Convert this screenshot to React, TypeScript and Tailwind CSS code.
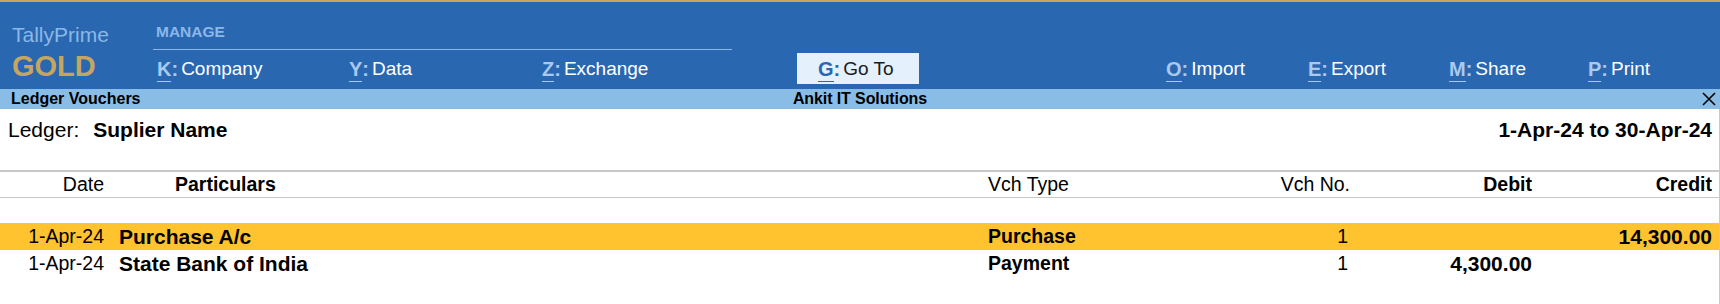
const manage = [
  ["K", "Company"],
  ["Y", "Data"],
  ["Z", "Exchange"],
];

const actions = [
  ["O", "Import", "w-[142px]"],
  ["E", "Export", "w-[141px]"],
  ["M", "Share", "w-[139px]"],
  ["P", "Print", "w-[120px]"],
];

const rows = [
  { date: "1-Apr-24", part: "Purchase A/c", type: "Purchase", no: "1", debit: "", credit: "14,300.00", active: true },
  { date: "1-Apr-24", part: "State Bank of India", type: "Payment", no: "1", debit: "4,300.00", credit: "", active: false },
];

function MenuItem({ hotkey, label, className = "" }: { hotkey: string; label: string; className?: string }) {
  return (
    <div className={"flex shrink-0 items-start text-[20px] leading-[24px] " + className}>
      <span className="border-b border-[#a9c9ef] font-bold text-[#a9c9ef]">{hotkey}</span>
      <span className="mr-[3px] font-bold text-[#a9c9ef]">:</span>
      <span className="text-[19px] text-white">{label}</span>
    </div>
  );
}

export default function App() {
  return (
    <div className="h-[304px] w-[1720px] overflow-hidden bg-white font-['Liberation_Sans',Arial,sans-serif] text-black">
      {/* top bar */}
      <div className="flex h-[89px] border-t-2 border-[#c9a55c] bg-[#2a67b1]">
        <div className="w-[153px] shrink-0 pl-[12px] pt-[21px]">
          <div className="text-[21px] leading-[24px] text-[#8ab8e8]">TallyPrime</div>
          <div className="mt-[3px] text-[29px] font-bold leading-[32px] text-[#c6a65e]">GOLD</div>
        </div>

        <div className="flex w-[579px] shrink-0 flex-col pt-[21px]">
          <div className="h-[27px] border-b border-[#8ab8e8] pl-[3px] text-[15.5px] font-bold leading-[18px] text-[#8ab8e8]">
            MANAGE
          </div>
          <div className="mt-[7px] grid grid-cols-[192px_193px_194px] pl-[4px]">
            {manage.map(([k, l]) => (
              <MenuItem key={k} hotkey={k} label={l} />
            ))}
          </div>
        </div>

        <div className="ml-[65px] mt-[51px] flex h-[31px] w-[122px] shrink-0 items-start bg-[#e4f0fb] pl-[21px] pt-[4px] text-[20px] leading-[24px]">
          <span className="border-b border-[#2a67b1] font-bold text-[#2a67b1]">G</span>
          <span className="mr-[3px] font-bold text-[#2a67b1]">:</span>
          <span className="text-[19px] text-[#1b1b1b]">Go To</span>
        </div>

        <div className="ml-[247px] flex shrink-0 pt-[55px]">
          {actions.map(([k, l, w]) => (
            <MenuItem key={k} hotkey={k} label={l} className={w} />
          ))}
        </div>
      </div>

      {/* title bar */}
      <div className="grid h-[20px] grid-cols-[1fr_auto_1fr] items-center bg-[#89bde6] px-[4px] text-[16px] font-bold leading-[20px]">
        <span className="pl-[7px]">Ledger Vouchers</span>
        <span className="text-center tracking-[-0.1px]">Ankit IT Solutions</span>
        <div className="flex justify-end">
          <svg width="14" height="14" viewBox="0 0 14 14">
            <path d="M1 1L13 13M13 1L1 13" stroke="#000" strokeWidth="1.6" />
          </svg>
        </div>
      </div>

      {/* body */}
      <div className="h-[195px] border-r border-[#c8c8c8]">
        <div className="flex items-start pl-[8px] pr-[7px] pt-[9px] text-[21px] leading-[24px]">
          <span>Ledger:</span>
          <span className="ml-[14px] font-bold">Suplier Name</span>
          <span className="ml-auto font-bold">1-Apr-24 to 30-Apr-24</span>
        </div>

        <div className="mt-[28px] grid grid-cols-[104px_884px_162px_200px_182px_180px] border-y border-t-2 border-[#c8c8c8] pr-[7px] text-[19.5px] leading-[25px]">
          <div className="text-right">Date</div>
          <div className="pl-[71px] font-bold">Particulars</div>
          <div>Vch Type</div>
          <div className="text-right">Vch No.</div>
          <div className="text-right font-bold">Debit</div>
          <div className="text-right font-bold">Credit</div>
        </div>

        <div className="mt-[25px]">
          {rows.map((r, i) => (
            <div
              key={i}
              className={
                "grid h-[27px] grid-cols-[104px_884px_162px_200px_182px_180px] items-start pr-[7px] leading-[27px] " +
                (r.active ? "bg-[#fec32e]" : "")
              }
            >
              <div className="text-right text-[19.5px]">{r.date}</div>
              <div className="pl-[15px] text-[21px] font-bold">{r.part}</div>
              <div className="text-[19.5px] font-bold">{r.type}</div>
              <div className="pr-[2px] text-right text-[19.5px]">{r.no}</div>
              <div className="text-right text-[21px] font-bold">{r.debit}</div>
              <div className="text-right text-[21px] font-bold">{r.credit}</div>
            </div>
          ))}
        </div>
      </div>
    </div>
  );
}
